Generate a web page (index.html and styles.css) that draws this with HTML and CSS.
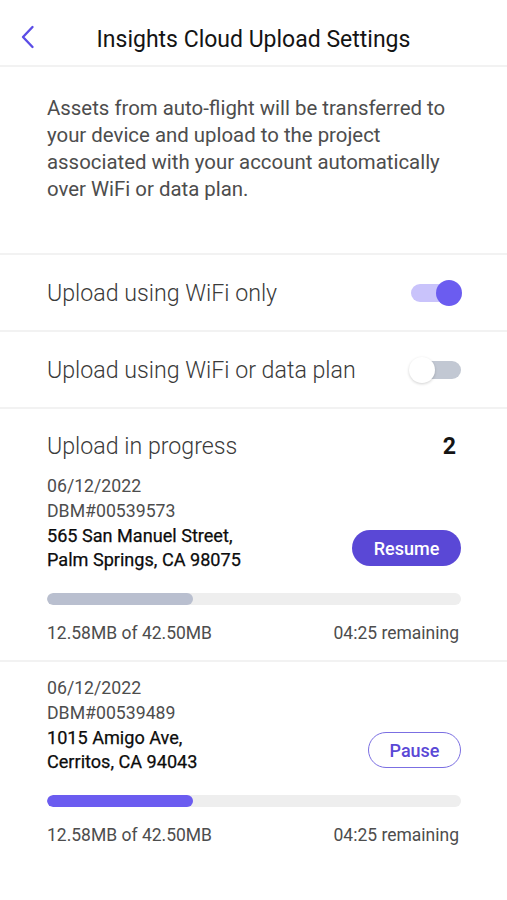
FILE: index.html
```html
<!DOCTYPE html>
<html>
<head>
    <meta charset="UTF-8">
    <meta name="viewport" content="width=device-width, initial-scale=1.0">
    <title>Insights Cloud Upload Settings</title>
    <link rel="stylesheet" href="styles.css">
</head>
<body>
    <div class="screen">
        <header class="topbar">
            <button class="back" aria-label="Back">
                <svg width="14" height="24" viewBox="0 0 14 24">
                    <path d="M11.5 2 L2 12 L11.5 22" fill="none" stroke="#5b4de6" stroke-width="2.4" stroke-linecap="round" stroke-linejoin="round"/>
                </svg>
            </button>
            <h1>Insights Cloud Upload Settings</h1>
        </header>

        <section class="intro">
            <p>Assets from auto-flight will be transferred to your device and upload to the project associated with your account automatically over WiFi or data plan.</p>
        </section>

        <div class="setting">
            <span>Upload using WiFi only</span>
            <span class="toggle on"><span class="thumb"></span></span>
        </div>
        <div class="setting">
            <span>Upload using WiFi or data plan</span>
            <span class="toggle"><span class="thumb"></span></span>
        </div>

        <section class="uploads">
            <div class="uploads-head">
                <span>Upload in progress</span>
                <span class="count">2</span>
            </div>

            <div class="item">
                <div class="date">06/12/2022</div>
                <div class="code">DBM#00539573</div>
                <div class="addr-row">
                    <div class="addr">565 San Manuel Street,<br>Palm Springs, CA 98075</div>
                    <button class="btn solid">Resume</button>
                </div>
                <div class="bar"><div class="fill paused" style="width: 35.3%"></div></div>
                <div class="stats">
                    <span>12.58MB of 42.50MB</span>
                    <span>04:25 remaining</span>
                </div>
            </div>

            <div class="item">
                <div class="date">06/12/2022</div>
                <div class="code">DBM#00539489</div>
                <div class="addr-row">
                    <div class="addr">1015 Amigo Ave,<br>Cerritos, CA 94043</div>
                    <button class="btn outline">Pause</button>
                </div>
                <div class="bar"><div class="fill" style="width: 35.3%"></div></div>
                <div class="stats">
                    <span>12.58MB of 42.50MB</span>
                    <span>04:25 remaining</span>
                </div>
            </div>
        </section>
    </div>
</body>
</html>
```

FILE: styles.css
```css
:root {
    --purple: #5a48d6;
    --purple-bright: #6b5cf0;
    --purple-soft: #c9c3fb;
    --divider: #f2f2f2;
    --text-dark: #141414;
    --text-mid: #3a3a3a;
    --text-soft: #4d4d4d;
}
body {
    margin: 0;
    background: #ffffff;
    font-family: Roboto, "Liberation Sans", sans-serif;
    color: var(--text-dark);
}
.screen {
    width: 507px;
}
.topbar {
    height: 51px;
    padding-top: 14px;
    border-bottom: 2px solid var(--divider);
    display: flex;
    align-items: center;
    justify-content: center;
    position: relative;
}
.topbar h1 {
    margin: 0;
    font-size: 23px;
    font-weight: 400;
    color: var(--text-dark);
}
.back {
    position: absolute;
    left: 20px;
    top: 25px;
    background: none;
    border: none;
    padding: 0;
    width: 16px;
    height: 24px;
}
.intro {
    padding: 28px 47px 50px 47px;
    border-bottom: 2px solid var(--divider);
}
.intro p {
    margin: 0;
    font-size: 20.4px;
    line-height: 27px;
    color: var(--text-soft);
    font-weight: 400;
}
.setting {
    height: 75px;
    padding: 0 46px 0 47px;
    border-bottom: 2px solid var(--divider);
    display: flex;
    align-items: center;
    justify-content: space-between;
    font-size: 23.2px;
    font-weight: 300;
    color: var(--text-mid);
}
.toggle {
    position: relative;
    width: 50px;
    height: 18px;
    border-radius: 9px;
    background: #c2c8d3;
}
.toggle .thumb {
    position: absolute;
    top: -4px;
    left: -2px;
    width: 26px;
    height: 26px;
    border-radius: 50%;
    background: #ffffff;
    box-shadow: 0 1px 3px rgba(0, 0, 0, 0.18);
}
.toggle.on {
    background: var(--purple-soft);
}
.toggle.on .thumb {
    left: auto;
    right: -1px;
    background: var(--purple-bright);
    box-shadow: none;
}
.uploads-head {
    padding: 23px 47px 14px 47px;
    display: flex;
    justify-content: space-between;
    align-items: center;
    font-size: 23.2px;
    font-weight: 300;
    line-height: 28px;
    color: var(--text-mid);
}
.uploads-head .count {
    font-weight: 700;
    color: var(--text-dark);
    margin-right: 4px;
}
.item {
    padding: 0 46px 15px 47px;
    border-bottom: 2px solid var(--divider);
}
.item + .item {
    padding-top: 14px;
    border-bottom: none;
}
.date, .code {
    font-size: 17.7px;
    line-height: 25px;
    color: var(--text-soft);
}
.addr-row {
    display: flex;
    align-items: center;
    justify-content: space-between;
}
.addr {
    font-size: 18.1px;
    line-height: 24px;
    font-weight: 400;
    color: #0c0c0c;
    -webkit-text-stroke: 0.25px #0c0c0c;
}
.btn {
    font-family: inherit;
    font-size: 18px;
    font-weight: 500;
    border-radius: 18px;
    height: 36px;
    cursor: pointer;
}
.btn.solid {
    width: 109px;
    background: var(--purple);
    color: #ffffff;
    border: none;
}
.btn.outline {
    width: 93px;
    background: #ffffff;
    color: var(--purple);
    border: 1.5px solid #7b6fe2;
}
.bar {
    margin-top: 21px;
    height: 12px;
    border-radius: 6px;
    background: #eeeeee;
    overflow: hidden;
}
.fill {
    height: 100%;
    border-radius: 6px;
    background: var(--purple-bright);
}
.fill.paused {
    background: #b9bfcf;
}
.stats {
    margin-top: 16px;
    padding-right: 2px;
    display: flex;
    justify-content: space-between;
    font-size: 17.5px;
    line-height: 24px;
    color: var(--text-soft);
}
```
